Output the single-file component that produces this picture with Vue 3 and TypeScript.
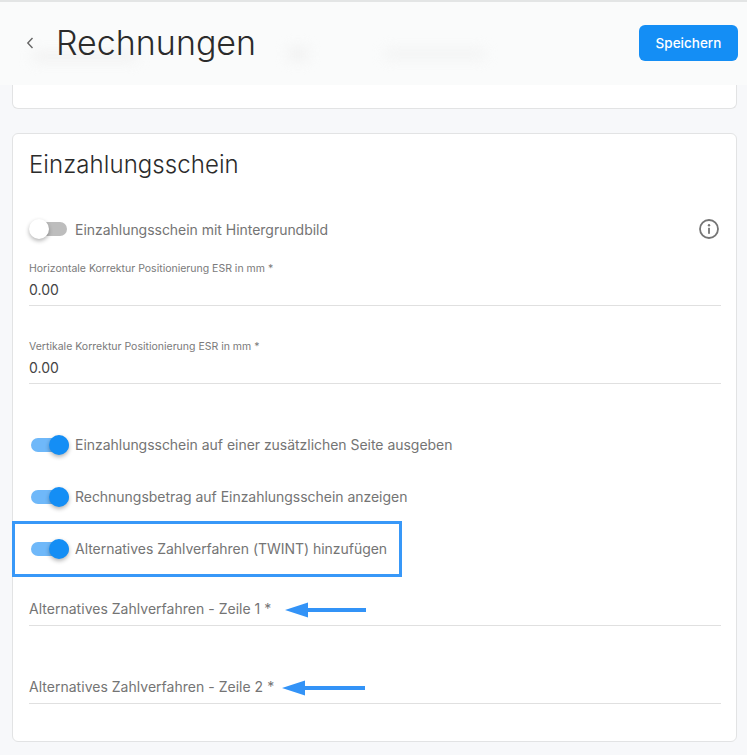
<template>
  <div class="page">
    <header class="top-bar">
      <span class="smudge s1"></span>
      <span class="smudge s2"></span>
      <span class="smudge s3"></span>
      <div class="title-wrap">
        <button class="back" type="button" aria-label="Zurück">
          <svg width="10" height="14" viewBox="0 0 10 14"><path d="M7.5 2 2.8 7l4.7 5" fill="none" stroke="#666" stroke-width="1.4" /></svg>
        </button>
        <h1>Rechnungen</h1>
      </div>
      <button class="save" type="button">Speichern</button>
    </header>

    <div class="card-stub"></div>

    <section class="card">
      <h2>Einzahlungsschein</h2>

      <div class="toggle-row first">
        <span class="toggle"><span class="track"></span><span class="knob"></span></span>
        <span class="toggle-label">Einzahlungsschein mit Hintergrundbild</span>
        <svg class="info" width="22" height="22" viewBox="0 0 22 22">
          <circle cx="11" cy="11" r="9" fill="none" stroke="#757575" stroke-width="1.8" />
          <circle cx="11" cy="7.2" r="1.2" fill="#757575" />
          <rect x="10.1" y="9.8" width="1.8" height="6" fill="#757575" />
        </svg>
      </div>

      <div v-for="f in numberFields" :key="f" class="field number">
        <label>{{ f }}</label>
        <div class="value">0.00</div>
      </div>

      <div class="switches">
        <div v-for="s in switches" :key="s" class="toggle-row on" :class="{ marked: s.includes('TWINT') }">
          <span class="toggle"><span class="track"></span><span class="knob"></span></span>
          <span class="toggle-label">{{ s }}</span>
        </div>
      </div>

      <div v-for="a in altFields" :key="a.label" class="field alt">
        <span class="alt-label">{{ a.label }}</span>
        <svg :style="{ marginLeft: a.gap + 'px' }" :width="a.width" height="16" :viewBox="`0 0 ${a.width} 16`">
          <path :d="`M0 8 23 0.5V6H${a.width}V10H23V15.5Z`" fill="#3393f7" />
        </svg>
      </div>
    </section>
  </div>
</template>

<script setup lang="ts">
const numberFields = [
  'Horizontale Korrektur Positionierung ESR in mm *',
  'Vertikale Korrektur Positionierung ESR in mm *',
]

const switches = [
  'Einzahlungsschein auf einer zusätzlichen Seite ausgeben',
  'Rechnungsbetrag auf Einzahlungsschein anzeigen',
  'Alternatives Zahlverfahren (TWINT) hinzufügen',
]

const altFields = [
  { label: 'Alternatives Zahlverfahren - Zeile 1 *', gap: 14, width: 81 },
  { label: 'Alternatives Zahlverfahren - Zeile 2 *', gap: 8, width: 83 },
]
</script>

<style>
html,
body {
  margin: 0;
  overflow: hidden;
}
</style>

<style scoped>
.page {
  width: 747px;
  height: 755px;
  box-sizing: border-box;
  overflow: hidden;
  background: #f7f8fa;
  font-family: Inter, "Noto Sans", sans-serif;
  color: #262626;
}

.top-bar {
  position: relative;
  height: 85px;
  box-sizing: border-box;
  border-top: 2px solid #e3e5e5;
  background: #fafbfb;
  display: flex;
  align-items: center;
  justify-content: space-between;
  padding: 0 9px 2px 25px;
}

.smudge {
  position: absolute;
  background: #ececec;
  filter: blur(7px);
  opacity: 0.7;
}

.s1 { left: 32px; top: 50px; width: 105px; height: 9px; }
.s2 { left: 288px; top: 46px; width: 20px; height: 12px; }
.s3 { left: 385px; top: 48px; width: 100px; height: 8px; }

.title-wrap {
  position: relative;
  display: flex;
  align-items: center;
  gap: 21px;
}

.back {
  padding: 0;
  border: none;
  background: none;
  display: flex;
}

h1 {
  margin: 0;
  font-size: 34px;
  font-weight: 300;
  line-height: 40px;
  color: #2b2b2b;
}

.save {
  position: relative;
  width: 99px;
  height: 36px;
  border: none;
  border-radius: 6px;
  background: #148ef5;
  color: #fff;
  font-family: inherit;
  font-size: 13.5px;
  font-weight: 500;
}

.card-stub {
  height: 24px;
  width: 725px;
  margin-left: 12px;
  box-sizing: border-box;
  background: #fff;
  border: 1px solid #e2e3e4;
  border-top: none;
  border-radius: 0 0 6px 6px;
}

.card {
  width: 725px;
  height: 609px;
  margin: 24px 0 0 12px;
  box-sizing: border-box;
  padding: 0 15px 0 16px;
  background: #fff;
  border: 1px solid #e2e3e4;
  border-radius: 6px;
}

h2 {
  margin: 0;
  padding-top: 17px;
  font-size: 24px;
  font-weight: 300;
  line-height: 28px;
  letter-spacing: 0.07px;
  color: #2b2b2b;
}

.toggle-row {
  position: relative;
  height: 24px;
  display: flex;
  align-items: center;
  gap: 8px;
}

.toggle-row.first {
  margin-top: 38px;
}

.toggle {
  position: relative;
  width: 37px;
  height: 20px;
  margin-left: 1px;
  flex: none;
}

.track {
  position: absolute;
  left: 1px;
  right: 0;
  top: 3px;
  height: 14px;
  border-radius: 7px;
  background: #bdbdbd;
}

.knob {
  position: absolute;
  left: -1px;
  top: 0;
  width: 20px;
  height: 20px;
  border-radius: 50%;
  background: #fff;
  box-shadow: 0 2px 4px rgba(0, 0, 0, 0.3);
}

.on .toggle {
  margin-left: 2px;
  width: 38px;
}

.on .track {
  left: 0;
  background: #6fb8f9;
}

.on .knob {
  left: auto;
  right: 0;
  background: #148ef5;
}

.on .toggle-label {
  margin-left: -2px;
  margin-bottom: 2px;
}

.toggle-label {
  font-size: 14px;
  color: #747474;
  letter-spacing: -0.03px;
}

.info {
  margin-left: auto;
  margin-right: 1px;
}

.field {
  box-sizing: border-box;
  border-bottom: 1px solid #e0e0e0;
}

.number {
  height: 49px;
  margin-top: 16px;
  padding-top: 5px;
}

.number + .number {
  margin-top: 29px;
}

.number label {
  display: block;
  font-size: 10.5px;
  line-height: 14px;
  color: #7a7a7a;
}

.value {
  margin-top: 4px;
  font-size: 14px;
  line-height: 20px;
  color: #444;
}

.switches {
  margin-top: 49px;
  display: flex;
  flex-direction: column;
  gap: 28px;
}

.marked::before {
  content: "";
  position: absolute;
  left: -17px;
  top: -16px;
  width: 390px;
  height: 56px;
  box-sizing: border-box;
  border: 3px solid #3898f8;
}

.alt {
  height: 32px;
  display: flex;
  align-items: center;
  margin-top: 46px;
}

.switches + .alt {
  margin-top: 33px;
}

.alt-label {
  margin-bottom: 2px;
  font-size: 14px;
  color: #747474;
  letter-spacing: 0.02px;
}
</style>
